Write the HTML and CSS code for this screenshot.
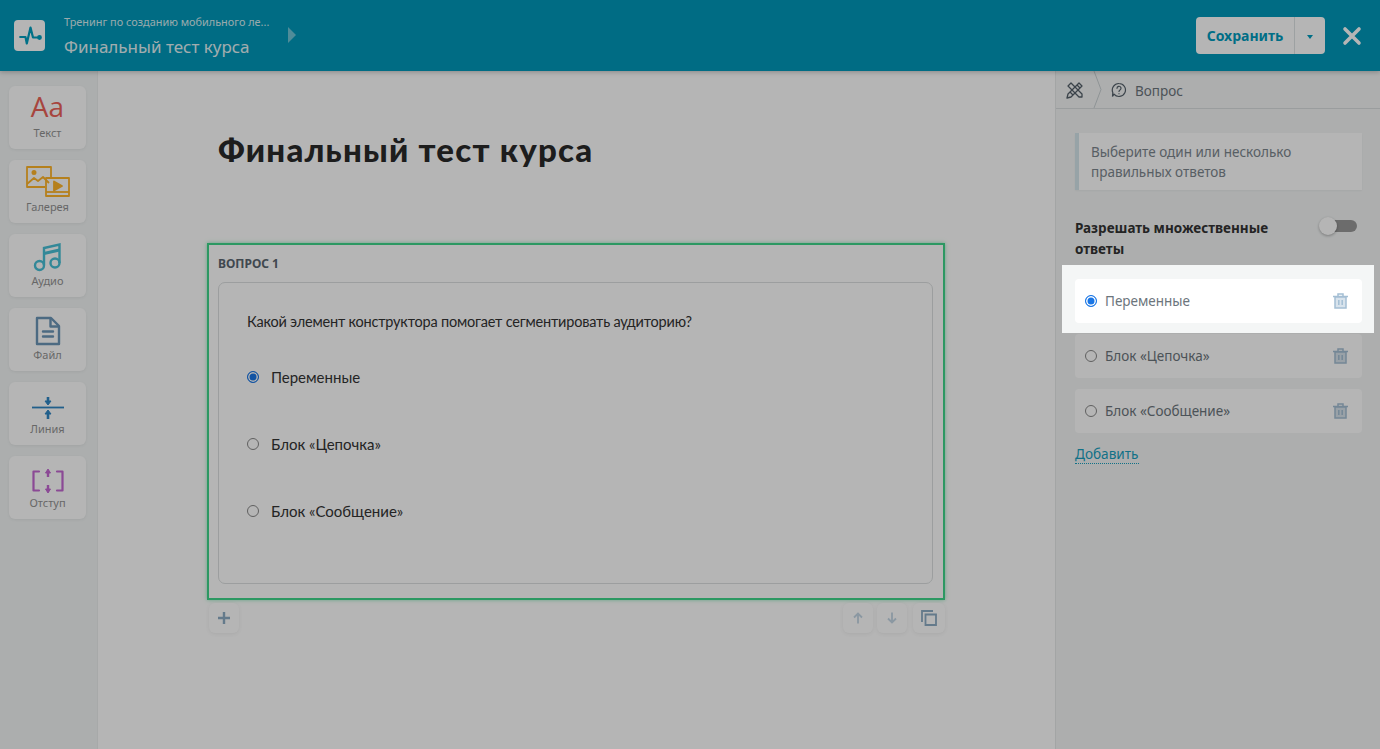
FILE: index.html
```html
<!DOCTYPE html>
<html lang="ru">
<head>
<meta charset="utf-8">
<title>Финальный тест курса</title>
<link rel="stylesheet" href="styles.css">
</head>
<body>
<header class="topbar">
  <div class="logo">
    <svg width="24" height="24" viewBox="0 0 24 24" fill="none" stroke="#00a0c0" stroke-width="2.200" stroke-linecap="round" stroke-linejoin="round"><path d="M2.200 13h5.300l1.300 6.500L12.500 3.500l2.500 10h7"/><circle cx="21.500" cy="13.500" r="1.300" fill="#00a0c0"/></svg>
  </div>
  <div class="crumbs">
    <div class="crumb-top">Тренинг по созданию мобильного ле...</div>
    <div class="crumb-main">Финальный тест курса</div>
  </div>
  <span class="crumb-arrow"></span>
  <div class="top-actions">
    <div class="save">
      <span class="save-label">Сохранить</span>
      <span class="save-drop"><span class="caret"></span></span>
    </div>
    <svg class="close" width="20" height="20" viewBox="0 0 20 20" stroke="#fff" stroke-width="3.600" stroke-linecap="round"><path d="M3 3l14 14M17 3L3 17"/></svg>
  </div>
</header>
<div class="workspace">
  <aside class="rail">
    <div class="tool">
      <span class="aa">Aa</span>
      <span class="tool-label">Текст</span>
    </div>
    <div class="tool">
      <svg width="44" height="32" viewBox="0 0 44 32" fill="none" stroke="#ffb52a" stroke-width="1.800" stroke-linejoin="round"><path d="M19 21H1V1h24v11"/><path d="M1 18l7-6 4 3 5-4 6 6"/><circle cx="8" cy="6.500" r="1.600" fill="#ffb52a"/><path d="M20 12h23v18H20z"/><path d="M20 26h23"/><path d="M28 15.500l8 4.500-8 4.500z" fill="#ffb52a"/></svg>
      <span class="tool-label">Галерея</span>
    </div>
    <div class="tool">
      <svg width="30" height="30" viewBox="0 0 30 30" fill="none" stroke="#48c0d6" stroke-width="2.400"><circle cx="6.500" cy="23.500" r="4.500"/><circle cx="22" cy="21" r="4.500"/><path d="M11 23V6l15.500-3.500V21"/><path d="M11 11.500l15.500-3.500" stroke-width="3"/></svg>
      <span class="tool-label">Аудио</span>
    </div>
    <div class="tool">
      <svg width="26" height="30" viewBox="0 0 26 30" fill="none" stroke="#6c96b8" stroke-width="2.400" stroke-linejoin="round"><path d="M2 2h14l8 8v18H2z"/><path d="M15.500 2v8.500H24"/><path d="M8 15.500h10M8 20.500h10" stroke-linecap="round"/></svg>
      <span class="tool-label">Файл</span>
    </div>
    <div class="tool">
      <svg width="32" height="24" viewBox="0 0 32 24" fill="#2f86c4" stroke="#2f86c4"><path d="M0 11.500h32" stroke-width="1.800"/><path d="M16 1v5" stroke-width="2.600"/><path d="M13 5h6l-3 4z"/><path d="M16 18v5" stroke-width="2.600"/><path d="M13 18h6l-3-4z"/></svg>
      <span class="tool-label">Линия</span>
    </div>
    <div class="tool">
      <svg width="32" height="26" viewBox="0 0 32 26" fill="#c468d2" stroke="#c468d2"><path d="M7 3.500H1.500v19H7M25 3.500h5.500v19H25" fill="none" stroke-width="2.200" stroke-linecap="round" stroke-linejoin="round"/><path d="M13.500 5l2.500-4 2.500 4zM13.500 21l2.500 4 2.500-4z"/><path d="M16 4v5M16 17v5" stroke-width="2.400"/></svg>
      <span class="tool-label">Отступ</span>
    </div>
  </aside>
  <main class="canvas">
    <h1 class="doc-title">Финальный тест курса</h1>
    <section class="block">
      <div class="block-label">ВОПРОС 1</div>
      <div class="question">
        <p class="q-text">Какой элемент конструктора помогает сегментировать аудиторию?</p>
        <div class="q-option"><span class="radio on"></span>Переменные</div>
        <div class="q-option"><span class="radio"></span>Блок «Цепочка»</div>
        <div class="q-option"><span class="radio"></span>Блок «Сообщение»</div>
      </div>
    </section>
    <div class="block-actions">
      <span class="act act-add"><svg width="14" height="14" viewBox="0 0 14 14" stroke="#8dacc4" stroke-width="2.400"><path d="M7 1v12M1 7h12"/></svg></span>
      <span class="act-group">
        <span class="act"><svg width="10" height="12" viewBox="0 0 10 12" fill="none" stroke="#c4d6e4" stroke-width="1.800"><path d="M5 11.500V1.500M1 5.500l4-4 4 4"/></svg></span>
        <span class="act"><svg width="10" height="12" viewBox="0 0 10 12" fill="none" stroke="#c4d6e4" stroke-width="1.800"><path d="M5 .5v10M1 6.500l4 4 4-4"/></svg></span>
        <span class="act act-copy"><svg width="16" height="16" viewBox="0 0 16 16" fill="none" stroke="#8dacc4" stroke-width="1.800"><path d="M1 12V1h11"/><path d="M4.500 4.500h10.500v10.500H4.500z"/></svg></span>
      </span>
    </div>
  </main>
  <aside class="panel">
    <div class="panel-head">
      <svg class="tools-ic" width="18" height="18" viewBox="0 0 18 18" fill="none" stroke="#55606a" stroke-width="1.300" stroke-linejoin="round"><path d="M2 5l3-3 11 11v3h-3z"/><path d="M13 2l3 3L5 16l-4 1 1-4z"/><path d="M11 4l3 3M4 11l3 3"/></svg>
      <svg class="chev" width="10" height="37" viewBox="0 0 10 37" fill="none" stroke="#c8cfd2"><path d="M1 0l7 18.500L1 37"/></svg>
      <svg class="q-ic" width="16" height="16" viewBox="0 0 16 16" fill="none" stroke="#55606a" stroke-width="1.200"><path d="M8 1.500a6.500 6.500 0 1 1-5 10.700L1.500 14.500l.3-4A6.500 6.500 0 0 1 8 1.500z"/><path d="M6 6.300a2 2 0 1 1 3 1.700c-.7.400-1 .8-1 1.500" stroke-linecap="round"/><path d="M8 11.300v1"/></svg>
      <span class="head-text">Вопрос</span>
    </div>
    <div class="panel-body">
      <div class="note">Выберите один или несколько правильных ответов</div>
      <div class="setting">
        <span class="setting-label">Разрешать множественные ответы</span>
        <span class="toggle"><span class="knob"></span></span>
      </div>
      <div class="answers">
        <div class="answer"><span class="radio on"></span><span class="answer-text">Переменные</span><svg class="trash" width="15" height="16" viewBox="0 0 15 16" fill="none" stroke="#a4bfd4" stroke-width="1.500"><path d="M0 3.500h15M5 3V1h5v2"/><path d="M2 4v11h11V4z" fill="#d8e3ec"/><path d="M5.800 7v5M9.200 7v5"/></svg></div>
        <div class="answer"><span class="radio"></span><span class="answer-text">Блок «Цепочка»</span><svg class="trash" width="15" height="16" viewBox="0 0 15 16" fill="none" stroke="#a4bfd4" stroke-width="1.500"><path d="M0 3.500h15M5 3V1h5v2"/><path d="M2 4v11h11V4z" fill="#d8e3ec"/><path d="M5.800 7v5M9.200 7v5"/></svg></div>
        <div class="answer"><span class="radio"></span><span class="answer-text">Блок «Сообщение»</span><svg class="trash" width="15" height="16" viewBox="0 0 15 16" fill="none" stroke="#a4bfd4" stroke-width="1.500"><path d="M0 3.500h15M5 3V1h5v2"/><path d="M2 4v11h11V4z" fill="#d8e3ec"/><path d="M5.800 7v5M9.200 7v5"/></svg></div>
      </div>
      <a class="add-link">Добавить</a>
    </div>
  </aside>
</div>
<div class="spotlight"></div>
</body>
</html>
```
FILE: styles.css
```css
* { box-sizing: border-box; }
html, body { margin: 0; height: 100%; overflow: hidden; }
body {
  width: 1380px;
  height: 749px;
  display: flex;
  flex-direction: column;
  font-family: "Noto Sans", "Open Sans", sans-serif;
  background: #fff;
  color: #333;
}
.topbar {
  height: 71px;
  flex: none;
  display: flex;
  align-items: center;
  padding: 0 18px 0 14px;
  background: #0099ba;
  box-shadow: 0 1px 5px rgba(0,0,0,.25);
  position: relative;
  z-index: 2;
}
.logo {
  width: 31px;
  height: 31px;
  background: #fff;
  border-radius: 4px;
  display: flex;
  align-items: center;
  justify-content: center;
}
.crumbs { margin-left: 19px; width: 224px; }
.crumb-top { font-size: 10.900px; line-height: 16px; color: #d8eef3; white-space: nowrap; }
.crumb-main { font-size: 17px; line-height: 22px; color: #e4f3f6; margin-top: 6px; white-space: nowrap; }
.crumb-arrow {
  width: 0;
  height: 0;
  margin-top: -1px;
  border-left: 8px solid #8cd0e0;
  border-top: 8px solid transparent;
  border-bottom: 8px solid transparent;
  opacity: .8;
}
.top-actions { margin-left: auto; display: flex; align-items: center; gap: 17px; }
.save {
  display: flex;
  height: 37px;
  background: #fff;
  border-radius: 4px;
  color: #009bbd;
  font-weight: 700;
  font-size: 14px;
}
.save-label { width: 98px; display: flex; align-items: center; justify-content: center; }
.save-drop { width: 31px; border-left: 1px solid #dde3e5; display: flex; align-items: center; justify-content: center; }
.caret { width: 0; height: 0; border-left: 3.500px solid transparent; border-right: 3.500px solid transparent; border-top: 4px solid #009bbd; margin-top: 3px; }
.workspace { flex: 1; display: flex; min-height: 0; }
.rail {
  width: 98px;
  flex: none;
  padding: 15px 0 0 9px;
  display: flex;
  flex-direction: column;
  gap: 11px;
  background: #f2f5f5;
  border-right: 1px solid #eceeee;
}
.tool {
  width: 77px;
  height: 63px;
  background: #fff;
  border-radius: 6px;
  box-shadow: 0 1px 3px rgba(0,0,0,.06);
  display: flex;
  flex-direction: column;
  align-items: center;
  justify-content: flex-end;
  padding-bottom: 9px;
  gap: 2px;
}
.tool-label { font-size: 11px; line-height: 14px; color: #929292; }
.aa { font-size: 28px; line-height: 32px; color: #ec6258; font-family: "Open Sans", sans-serif; margin-bottom: 2px; }
.canvas {
  flex: 1;
  padding: 0 110px 0 109px;
  background: #fff;
  font-family: "Lato", "Noto Sans", sans-serif;
}
.doc-title {
  margin: 54px 0 0 11px;
  height: 49px;
  font-size: 33px;
  line-height: 48px;
  font-weight: 900;
  color: #2a2a2a;
  letter-spacing: 1.200px;
}
.block {
  margin-top: 69px;
  height: 357px;
  border: 2px solid #3fd68a;
  box-shadow: 0 0 4px rgba(63,214,138,.6);
  padding: 10px 10px 14px 9px;
  display: flex;
  flex-direction: column;
}
.block-label { font-size: 12px; line-height: 18px; font-weight: 700; color: #5b6670; font-family: "Noto Sans", sans-serif; }
.question {
  flex: 1;
  margin-top: 9px;
  border: 1px solid #dcdfe0;
  border-radius: 7px;
  padding: 29px 28px;
}
.q-text { margin: 0; font-size: 14.500px; line-height: 20px; color: #333; letter-spacing: -.2px; }
.q-option { display: flex; align-items: center; gap: 12px; height: 20px; margin-top: 47px; font-size: 15px; color: #333; }
.q-text + .q-option { margin-top: 35px; }
.radio {
  width: 12px;
  height: 12px;
  flex: none;
  border-radius: 50%;
  border: 1px solid #888;
  background: #fff;
}
.radio.on { border-color: #1976e6; background: #1976e6; box-shadow: inset 0 0 0 1.500px #fff; }
.block-actions { display: flex; justify-content: space-between; margin-top: 3px; padding: 0 0 0 2px; }
.act-group { display: flex; gap: 4px; }
.act {
  width: 30px;
  height: 30px;
  border-radius: 6px;
  background: #fff;
  box-shadow: 0 1px 4px rgba(0,0,0,.07);
  display: flex;
  align-items: center;
  justify-content: center;
}
.act-copy { margin-left: 2px; width: 32px; }
.panel {
  width: 325px;
  flex: none;
  background: #f4f6f6;
  border-left: 1px solid #e6e9e9;
}
.panel-head {
  height: 38px;
  display: flex;
  align-items: center;
  border-bottom: 1px solid #d9dddf;
  color: #6c757c;
  font-size: 13.500px;
  padding-left: 10px;
}
.tools-ic { flex: none; }
.chev { margin-left: 9px; flex: none; }
.q-ic { margin-left: 8px; flex: none; }
.head-text { margin-left: 8px; padding-top: 2px; }
.panel-body { padding: 24px 18px 0 19px; }
.note {
  height: 57px;
  border-left: 4px solid #d5e6ec;
  background: #fff;
  box-shadow: 0 1px 2px rgba(0,0,0,.05);
  padding: 9px 12px;
  font-size: 13.500px;
  line-height: 20px;
  color: #7c868e;
}
.setting { display: flex; justify-content: space-between; margin-top: 28px; height: 40px; padding-right: 5px; }
.setting-label { width: 240px; font-size: 13.500px; line-height: 21px; font-weight: 700; color: #333; }
.toggle {
  position: relative;
  width: 37px;
  height: 12px;
  margin-top: 2px;
  border-radius: 6px;
  background: #999;
}
.knob {
  position: absolute;
  left: -1px;
  top: -3px;
  width: 18px;
  height: 18px;
  border-radius: 50%;
  background: #fff;
  box-shadow: 0 1px 3px rgba(0,0,0,.3);
}
.answers { margin-top: 21px; display: flex; flex-direction: column; gap: 11px; }
.answer {
  height: 44px;
  background: #fff;
  border-radius: 4px;
  display: flex;
  align-items: center;
  padding: 0 14px 0 10px;
  font-size: 13.500px;
  color: #6c757c;
}
.answer-text { margin-left: 8px; flex: 1; }
.trash { flex: none; }
.add-link {
  display: inline-block;
  margin-top: 12px;
  font-size: 13.600px;
  line-height: 18px;
  color: #18a0bf;
  border-bottom: 1px dotted #18a0bf;
}
.spotlight {
  position: absolute;
  left: 1062px;
  top: 265px;
  width: 312px;
  height: 68px;
  box-shadow: 0 0 0 2000px rgba(0,0,0,.29);
  z-index: 5;
}
```
